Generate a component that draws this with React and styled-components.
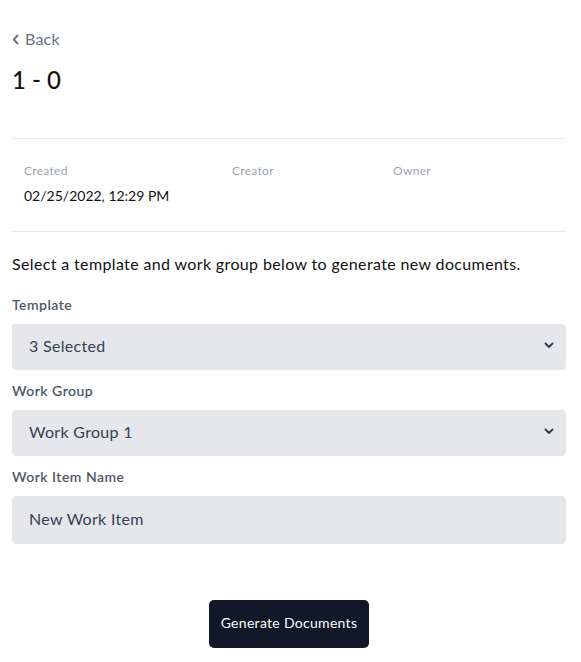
import React from "react";
import styled, { createGlobalStyle } from "styled-components";

const Global = createGlobalStyle`
  html, body { margin: 0; padding: 0; background: #fff; }
  body { font-family: "Lato", "Noto Sans", sans-serif; color: #111827; }
  * { box-sizing: border-box; }
`;

const Page = styled.div`
  padding: 29px 15px 0 12px;
  display: flex;
  flex-direction: column;
`;

const BackLink = styled.a`
  display: flex;
  align-items: center;
  gap: 6px;
  color: #6b7280;
  font-size: 16px;
  line-height: 20px;
  text-decoration: none;
  cursor: pointer;
  letter-spacing: 0.2px;
`;

const Title = styled.h1`
  margin: 15px 0 0;
  font-size: 24px;
  font-weight: 500;
  line-height: 32px;
  color: #111;
`;

const Divider = styled.hr`
  border: 0;
  border-top: 1px solid #e5e7eb;
  margin: ${(p) => p.$mt || 0}px 0 0;
`;

const Meta = styled.div`
  display: grid;
  grid-template-columns: 208px 161px 1fr;
  padding: 24px 12px 0;
  height: 92px;
`;

const MetaItem = styled.div`
  display: flex;
  flex-direction: column;
  gap: 7px;
`;

const MetaLabel = styled.span`
  font-size: 12px;
  line-height: 16px;
  color: #9ca3af;
  letter-spacing: 0.3px;
`;

const MetaValue = styled.span`
  font-size: 14px;
  line-height: 20px;
  color: #111;
`;

const Intro = styled.p`
  margin: 21px 0 0;
  font-size: 16px;
  line-height: 22px;
  color: #111;
  letter-spacing: 0.36px;
`;

const Field = styled.div`
  display: flex;
  flex-direction: column;
  gap: 9px;
  margin-top: ${(p) => p.$mt}px;
`;

const Label = styled.label`
  font-size: 14px;
  font-weight: 500;
  line-height: 20px;
  color: #4b5563;
  letter-spacing: 0.5px;
  -webkit-text-stroke: 0.12px #4b5563;
`;

const Box = styled.div`
  height: ${(p) => p.$h || 46}px;
  background: #e5e7eb;
  border-radius: 4px;
  display: flex;
  align-items: center;
  justify-content: space-between;
  padding: 0 12px 3px 17px;
  font-size: 16px;
  color: #374151;
  letter-spacing: 0.3px;
`;

const Chevron = () => (
  <svg width="10" height="7" viewBox="0 0 10 7" fill="none">
    <path d="M1.5 1.5 L5 5 L8.5 1.5" stroke="#374151" strokeWidth="2" strokeLinecap="round" strokeLinejoin="round" />
  </svg>
);

const Footer = styled.div`
  display: flex;
  justify-content: center;
  margin-top: 56px;
`;

const Button = styled.button`
  width: 160px;
  height: 48px;
  padding: 0 0 3px;
  background: #111827;
  color: #fff;
  border: 0;
  border-radius: 5px;
  font-family: "Lato", "Noto Sans", sans-serif;
  font-size: 14px;
  letter-spacing: 0.3px;
  cursor: pointer;
`;

export default function App() {
  return (
    <>
      <Global />
      <Page>
        <BackLink>
          <svg width="7" height="11" viewBox="0 0 7 11" fill="none">
            <path d="M5.5 1.5 L1.8 5.5 L5.5 9.5" stroke="#6b7280" strokeWidth="2" strokeLinecap="round" strokeLinejoin="round" />
          </svg>
          Back
        </BackLink>
        <Title>1 - 0</Title>
        <Divider $mt={42} />
        <Meta>
          <MetaItem>
            <MetaLabel>Created</MetaLabel>
            <MetaValue>02/25/2022, 12:29 PM</MetaValue>
          </MetaItem>
          <MetaItem>
            <MetaLabel>Creator</MetaLabel>
          </MetaItem>
          <MetaItem>
            <MetaLabel>Owner</MetaLabel>
          </MetaItem>
        </Meta>
        <Divider />
        <Intro>Select a template and work group below to generate new documents.</Intro>
        <Field $mt={20}>
          <Label>Template</Label>
          <Box>
            3 Selected
            <Chevron />
          </Box>
        </Field>
        <Field $mt={11}>
          <Label>Work Group</Label>
          <Box>
            Work Group 1
            <Chevron />
          </Box>
        </Field>
        <Field $mt={11}>
          <Label>Work Item Name</Label>
          <Box $h={48}>New Work Item</Box>
        </Field>
        <Footer>
          <Button>Generate Documents</Button>
        </Footer>
      </Page>
    </>
  );
}
